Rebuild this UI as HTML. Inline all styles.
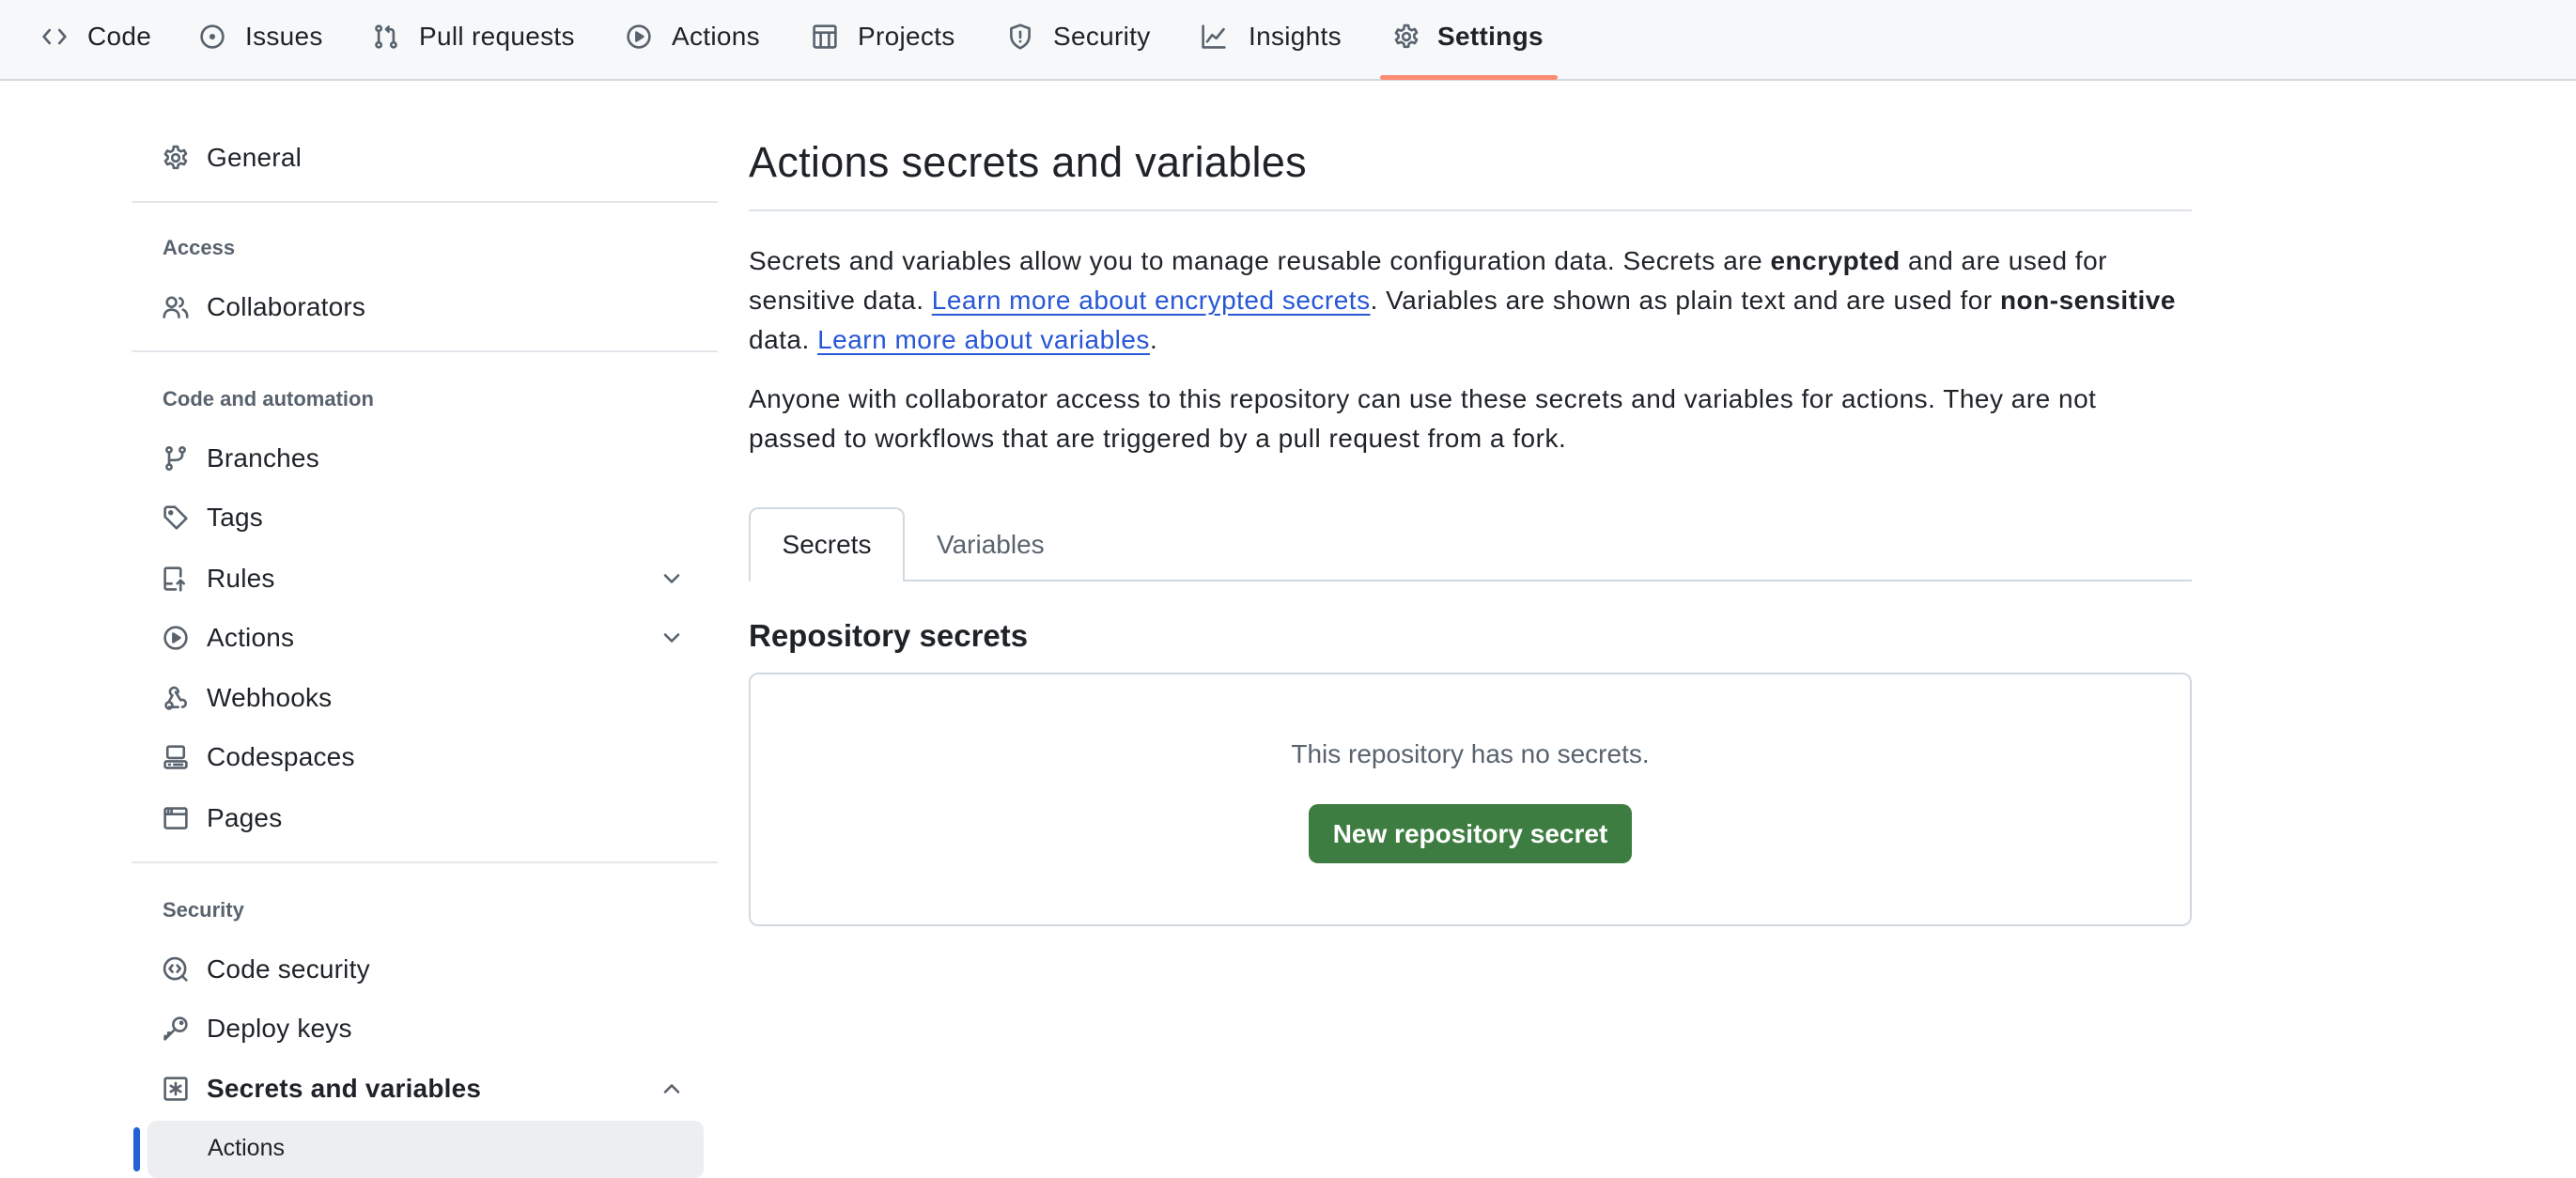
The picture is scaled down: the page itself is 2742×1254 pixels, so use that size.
<!DOCTYPE html>
<html><head><meta charset="utf-8"><style>
*{margin:0;padding:0;box-sizing:border-box}
body{width:2742px;height:1254px;overflow:hidden;background:#fff;font-family:"Liberation Sans",sans-serif;color:#1f2328;position:relative}
.a{position:absolute;white-space:nowrap}
.nav{position:absolute;left:0;top:0;width:2742px;height:86px;background:#f6f8fa;border-bottom:2px solid #d1d9e0}
.nt{font-size:28px;line-height:28px;top:25px;letter-spacing:0.3px}
svg.i{position:absolute;fill:none;stroke:#59636e;stroke-width:1.5;stroke-linecap:round;stroke-linejoin:round}
.sb{font-size:28px;line-height:28px;letter-spacing:0.2px}
.lab{font-size:22px;font-weight:bold;color:#59636e}
.hr{position:absolute;height:2px;background:#e3e7eb}
p.t{position:absolute;left:797px;width:1525px;font-size:28px;line-height:42px;color:#1f2328;letter-spacing:0.5px}
a{color:#2757d6;text-decoration:underline;text-underline-offset:5px}
</style></head><body>
<div class="nav"></div>
<svg class="i" style="left:44px;top:25px" width="28" height="28" viewBox="0 0 16 16"><path d="M5 4L1.5 8 5 12M11 4l3.5 4-3.5 4"/></svg>
<div class="a nt" style="left:93px">Code</div>
<svg class="i" style="left:212px;top:25px" width="28" height="28" viewBox="0 0 16 16"><circle cx="8" cy="8" r="6.5"/><circle cx="8" cy="8" r="1" fill="#59636e"/></svg>
<div class="a nt" style="left:261px">Issues</div>
<svg class="i" style="left:397px;top:25px" width="28" height="28" viewBox="0 0 16 16"><circle cx="3.5" cy="3" r="1.5"/><circle cx="3.5" cy="13" r="1.5"/><circle cx="12.5" cy="13" r="1.5"/><path d="M3.5 4.5v7M12.5 11.5V5.5Q12.5 3.5 10.5 3.5H8M9.5 2L8 3.5 9.5 5"/></svg>
<div class="a nt" style="left:446px">Pull requests</div>
<svg class="i" style="left:666px;top:25px" width="28" height="28" viewBox="0 0 16 16"><circle cx="8" cy="8" r="6.5"/><path d="M6.5 5.5v5l4-2.5z" fill="#59636e"/></svg>
<div class="a nt" style="left:715px">Actions</div>
<svg class="i" style="left:864px;top:25px" width="28" height="28" viewBox="0 0 16 16"><rect x="1.5" y="1.5" width="13" height="13" rx="1"/><path d="M1.5 5.5h13M5.5 5.5v9M10.5 5.5v9"/></svg>
<div class="a nt" style="left:913px">Projects</div>
<svg class="i" style="left:1072px;top:25px" width="28" height="28" viewBox="0 0 16 16"><path d="M8 1L2.5 3v4.5c0 3.5 2.5 6 5.5 7.5 3-1.5 5.5-4 5.5-7.5V3z"/><path d="M8 5v3.5M8 10.8v.2"/></svg>
<div class="a nt" style="left:1121px">Security</div>
<svg class="i" style="left:1278px;top:25px" width="28" height="28" viewBox="0 0 16 16"><path d="M1.5 1.5v13h13M4 11l3-4 2.5 2L14 3.5"/></svg>
<div class="a nt" style="left:1329px">Insights</div>
<svg class="i" style="left:1483px;top:25px" width="28" height="28" viewBox="0 0 16 16"><circle cx="8" cy="8" r="2.2"/><path d="M6.8 1.2h2.4l.4 2 1.6.9 1.9-.7 1.2 2.1-1.5 1.3v1.8l1.5 1.3-1.2 2.1-1.9-.7-1.6.9-.4 2H6.8l-.4-2-1.6-.9-1.9.7-1.2-2.1 1.5-1.3V7.1L1.7 5.8l1.2-2.1 1.9.7 1.6-.9z"/></svg>
<div class="a nt" style="left:1530px;font-weight:bold">Settings</div>
<div class="a" style="left:1469px;top:80px;width:189px;height:5px;background:#fd8c73;border-radius:3px"></div>

<svg class="i" style="left:173px;top:154px" width="28" height="28" viewBox="0 0 16 16"><circle cx="8" cy="8" r="2.2"/><path d="M6.8 1.2h2.4l.4 2 1.6.9 1.9-.7 1.2 2.1-1.5 1.3v1.8l1.5 1.3-1.2 2.1-1.9-.7-1.6.9-.4 2H6.8l-.4-2-1.6-.9-1.9.7-1.2-2.1 1.5-1.3V7.1L1.7 5.8l1.2-2.1 1.9.7 1.6-.9z"/></svg>
<div class="a sb" style="left:220px;top:154px">General</div>
<div class="hr" style="left:140px;top:214px;width:624px"></div>
<div class="a lab" style="left:173px;top:251px">Access</div>
<svg class="i" style="left:173px;top:313px" width="28" height="28" viewBox="0 0 16 16"><circle cx="5.5" cy="5" r="2.8"/><path d="M1 14c0-3 2-4.5 4.5-4.5S10 11 10 14M10.5 2.5a2.6 2.6 0 0 1 0 5M12.5 9.5c1.5.7 2.5 2.2 2.5 4.5"/></svg>
<div class="a sb" style="left:220px;top:313px">Collaborators</div>
<div class="hr" style="left:140px;top:373px;width:624px"></div>
<div class="a lab" style="left:173px;top:412px">Code and automation</div>
<svg class="i" style="left:173px;top:474px" width="28" height="28" viewBox="0 0 16 16"><circle cx="4" cy="2.8" r="1.5"/><circle cx="4" cy="13.2" r="1.5"/><circle cx="12" cy="2.8" r="1.5"/><path d="M4 4.3v7.4M12 4.3V6c0 2-2 3-4 3H4"/></svg>
<div class="a sb" style="left:220px;top:474px">Branches</div>
<svg class="i" style="left:173px;top:537px" width="28" height="28" viewBox="0 0 16 16"><path d="M1.5 2.5v5l7 7 6-6-7-7h-5z"/><circle cx="5" cy="5" r=".8" fill="#59636e"/></svg>
<div class="a sb" style="left:220px;top:537px">Tags</div>
<svg class="i" style="left:173px;top:602px" width="28" height="28" viewBox="0 0 16 16"><path d="M8 14.5H2.5a1 1 0 0 1-1-1v-11a1 1 0 0 1 1-1H10a1 1 0 0 1 1 1v4M1.5 11h4M11 15V9M9 11l2-2 2 2"/></svg>
<div class="a sb" style="left:220px;top:602px">Rules</div>
<svg class="i" style="left:701px;top:602px" width="28" height="28" viewBox="0 0 16 16"><path d="M4 6l4 4 4-4"/></svg>
<svg class="i" style="left:173px;top:665px" width="28" height="28" viewBox="0 0 16 16"><circle cx="8" cy="8" r="6.5"/><path d="M6.5 5.5v5l4-2.5z" fill="#59636e"/></svg>
<div class="a sb" style="left:220px;top:665px">Actions</div>
<svg class="i" style="left:701px;top:665px" width="28" height="28" viewBox="0 0 16 16"><path d="M4 6l4 4 4-4"/></svg>
<svg class="i" style="left:173px;top:729px" width="28" height="28" viewBox="0 0 16 16"><path d="M6 6.5L4 10M9.5 4.5A2.5 2.5 0 1 0 6 6.5M4 13.5h5.5M12 13.5a2.2 2.2 0 1 0-1-4.2L8 4.5"/><circle cx="4" cy="12.5" r="2"/></svg>
<div class="a sb" style="left:220px;top:729px">Webhooks</div>
<svg class="i" style="left:173px;top:792px" width="28" height="28" viewBox="0 0 16 16"><rect x="3" y="1.5" width="10" height="7" rx="1"/><rect x="1.5" y="10.5" width="13" height="4" rx="1"/><path d="M4 12.5h.5M7 12.5h5"/></svg>
<div class="a sb" style="left:220px;top:792px">Codespaces</div>
<svg class="i" style="left:173px;top:857px" width="28" height="28" viewBox="0 0 16 16"><rect x="1.5" y="2" width="13" height="12" rx="1"/><path d="M1.5 5.5h13M3.5 2.5v3M5.5 2.5v3"/></svg>
<div class="a sb" style="left:220px;top:857px">Pages</div>
<div class="hr" style="left:140px;top:917px;width:624px"></div>
<div class="a lab" style="left:173px;top:956px">Security</div>
<svg class="i" style="left:173px;top:1018px" width="28" height="28" viewBox="0 0 16 16"><circle cx="7.5" cy="7.5" r="6.3"/><path d="M12 12l2.5 2.5M6 5.5L4.3 7.5 6 9.5M9 5.5l1.7 2L9 9.5"/></svg>
<div class="a sb" style="left:220px;top:1018px">Code security</div>
<svg class="i" style="left:173px;top:1081px" width="28" height="28" viewBox="0 0 16 16"><circle cx="10.5" cy="5.5" r="4"/><path d="M7.5 8.5l-6 6v-2h2v-2h2l1-1"/><circle cx="11.5" cy="4.5" r=".6" fill="#59636e"/></svg>
<div class="a sb" style="left:220px;top:1081px">Deploy keys</div>
<svg class="i" style="left:173px;top:1145px" width="28" height="28" viewBox="0 0 16 16"><rect x="1.5" y="1.5" width="13" height="13" rx="1"/><path d="M8 4.5v7M5 6.2l6 3.6M11 6.2l-6 3.6"/></svg>
<div class="a sb" style="left:220px;top:1145px;font-weight:bold">Secrets and variables</div>
<svg class="i" style="left:701px;top:1145px" width="28" height="28" viewBox="0 0 16 16"><path d="M4 10l4-4 4 4"/></svg>
<div class="a" style="left:157px;top:1193px;width:592px;height:61px;background:#eceef0;border-radius:10px"></div>
<div class="a" style="left:142px;top:1200px;width:7px;height:47px;background:#2160d5;border-radius:4px"></div>
<div class="a" style="left:221px;top:1210px;font-size:25px;line-height:25px">Actions</div>

<div class="a" style="left:797px;top:148px;font-size:45px;line-height:50px;letter-spacing:0.3px">Actions secrets and variables</div>
<div class="hr" style="left:797px;top:223px;width:1536px;background:#dde2e6"></div>
<p class="t" style="top:257px">Secrets and variables allow you to manage reusable configuration data. Secrets are <b>encrypted</b> and are used for sensitive data. <a>Learn more about encrypted secrets</a>. Variables are shown as plain text and are used for <b>non-sensitive</b> data. <a>Learn more about variables</a>.</p>
<p class="t" style="top:404px">Anyone with collaborator access to this repository can use these secrets and variables for actions. They are not passed to workflows that are triggered by a pull request from a fork.</p>
<div class="a" style="left:797px;top:617px;width:1536px;height:2px;background:#d1d9e0"></div>
<div class="a" style="left:797px;top:540px;width:166px;height:79px;background:#fff;border:2px solid #d1d9e0;border-bottom:none;border-radius:10px 10px 0 0"></div>
<div class="a" style="left:880px;top:566px;font-size:28px;line-height:28px;transform:translateX(-50%)">Secrets</div>
<div class="a" style="left:997px;top:566px;font-size:28px;line-height:28px;color:#59636e">Variables</div>
<div class="a" style="left:797px;top:660px;font-size:33px;line-height:34px;font-weight:bold">Repository secrets</div>
<div class="a" style="left:797px;top:716px;width:1536px;height:270px;border:2px solid #d1d9e0;border-radius:10px"></div>
<div class="a" style="left:1565px;top:788px;font-size:28px;line-height:30px;color:#59636e;transform:translateX(-50%)">This repository has no secrets.</div>
<div class="a" style="left:1393px;top:856px;width:344px;height:63px;background:#3e7d41;border-radius:10px;color:#fff;font-size:28px;font-weight:bold;line-height:63px;text-align:center">New repository secret</div>
</body></html>
